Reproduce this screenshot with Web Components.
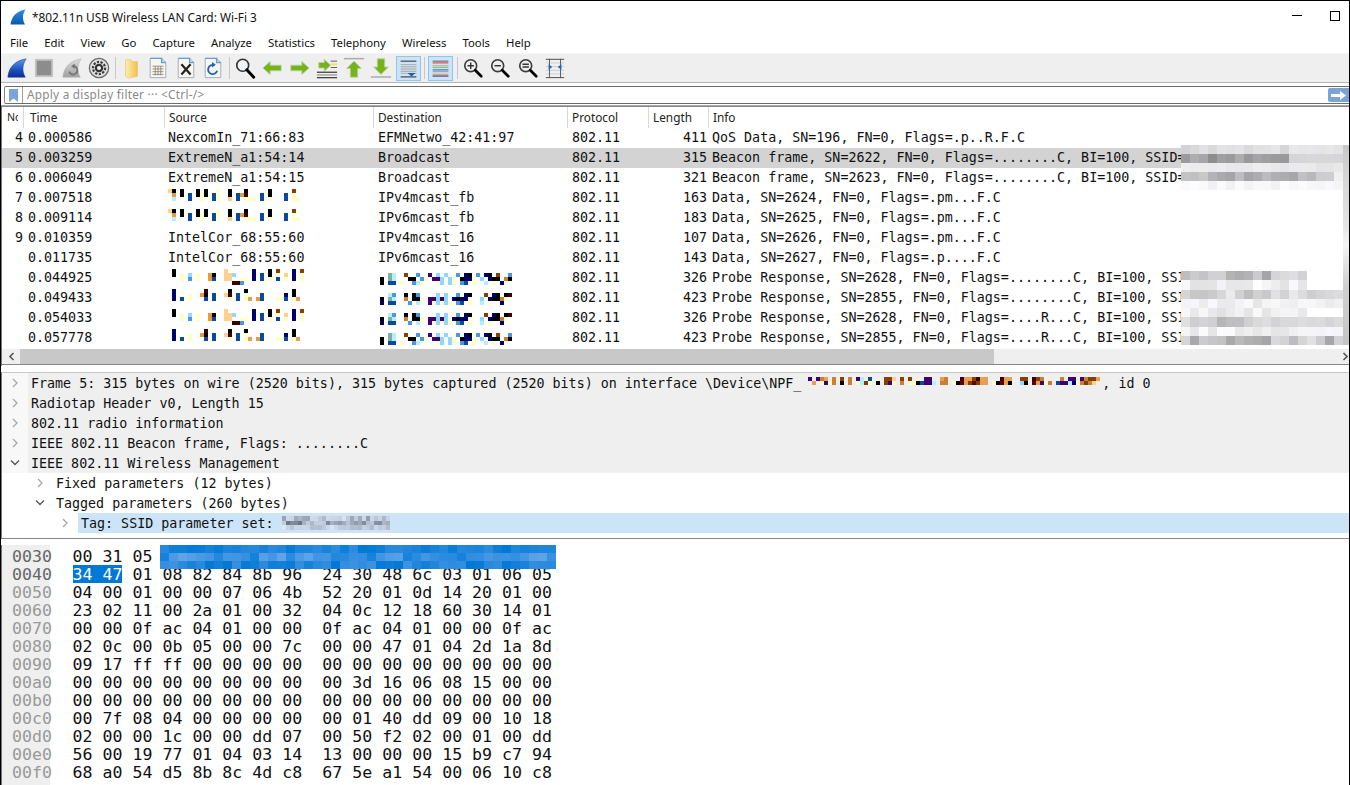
<!DOCTYPE html>
<html lang="en"><head><meta charset="utf-8"><title>Wireshark</title>
<style>html,body{margin:0;padding:0;background:#fff;overflow:hidden;width:1350px;height:785px}</style>
</head><body>
<wf-window>
  <wf-titlebar>*802.11n USB Wireless LAN Card: Wi-Fi 3</wf-titlebar>
  <wf-menubar items="File,Edit,View,Go,Capture,Analyze,Statistics,Telephony,Wireless,Tools,Help"></wf-menubar>
  <wf-toolbar></wf-toolbar>
  <wf-filter></wf-filter>
  <wf-packet-list></wf-packet-list>
  <wf-details></wf-details>
  <wf-hex></wf-hex>
</wf-window>
<script>
const MONO='"DejaVu Sans Mono","Liberation Mono",monospace';
const UI='"Noto Sans","Open Sans",sans-serif';
const PAL={k:'#000',b:'#0a4a9a',n:'#00006a',y:'#ffffcc',t:'#ffd090',o:'#e89a40',c:'#b0f0ff',l:'#4a98e0',m:'#400000',r:'#8a4000',p:'#400070',s:'#90d8ff',g:'#80b0a0',a:'#e8a050',e:'#c98030',d:'#600000',h:'#804000'};
function define(name,html,extra){
  customElements.define(name,class extends HTMLElement{
    connectedCallback(){ if(this.shadowRoot)return; const r=this.attachShadow({mode:'open'}); r.innerHTML=typeof html==='function'?html(this):html; if(extra)extra(this,r);}
  });
}
define('wf-mosaic',el=>{
  const rows=el.getAttribute('rows').split('|'),w=+(el.getAttribute('cw')||4),h=+(el.getAttribute('ch')||4);
  const cols=+(el.getAttribute('cols')||Math.max(...rows.map(r=>r.length)));
  let s='';
  rows.forEach((r,y)=>[...r].slice(0,cols).forEach((c,x)=>{if(PAL[c])s+=`<rect x="${x*w}" y="${y*h}" width="${w}" height="${h}" fill="${PAL[c]}"/>`;}));
  return `<style>:host{display:inline-block;line-height:0;vertical-align:top}svg{display:block}</style><svg width="${cols*w}" height="${rows.length*h}" shape-rendering="crispEdges">${s}</svg>`;
});
let seedState=7;
function rnd(){seedState=(seedState*16807)%2147483647;return seedState/2147483647;}
define('wf-blur',el=>{
  const w=+el.getAttribute('cw'),h=+el.getAttribute('ch'),bands=el.getAttribute('bands').split(';');
  const tint=el.getAttribute('tint');let s='',mx=0;
  bands.forEach((b,y)=>{const p=b.split(',');const c=+p[0],lo=+p[1],hi=+p[2],sw=+(p[3]||c),lo2=+(p[4]||lo),hi2=+(p[5]||hi);mx=Math.max(mx,c);
    for(let x=0;x<c;x++){const L=x<sw?lo:lo2,H=x<sw?hi:hi2;const v=Math.round(L+(H-L)*rnd());
      let col;
      if(tint==='blue'){const t=v/100;col=`rgb(${Math.round(0+180*t)},${Math.round(120+80*t)},${Math.round(215+30*t)})`;}
      else if(tint==='pale'){col=`rgb(${v-18},${v-6},${v+10>255?255:v+10})`;}
      else col=`rgb(${v},${v},${Math.min(255,v+Math.round(rnd()*4))})`;
      s+=`<rect x="${x*w}" y="${y*h}" width="${w}" height="${h}" fill="${col}"/>`;}
  });
  return `<style>:host{display:block;line-height:0}svg{display:block}</style><svg width="${mx*w}" height="${bands.length*h}" shape-rendering="crispEdges">${s}</svg>`;
});
define('wf-window',`<style>:host{display:flex;flex-direction:column;width:1350px;height:785px;box-sizing:border-box;border-top:1px solid #000;border-left:1px solid #000;border-right:1px solid #000;overflow:hidden;background:#fff;color:#000;font-family:${UI}}</style><slot></slot>`);
define('wf-titlebar',`<style>:host{display:flex;align-items:center;height:31px;flex:none;font-size:11.86px;color:#111}
svg.f{margin:0 6px 0 9px;flex:none}.t{flex:1}.b{width:46px;display:flex;justify-content:center;align-items:center;height:30px;flex:none}</style>
<svg class="f" width="16" height="16" viewBox="0 0 16 16"><defs><linearGradient id="g" x1="0" y1="0" x2="0" y2="1"><stop offset="0" stop-color="#2f8fe0"/><stop offset="1" stop-color="#0a58b0"/></linearGradient></defs><path d="M0.5 15.5C1.5 8 6 2 15.5 0.5C12.5 5 12 10 15 15.5Z" fill="url(#g)"/></svg>
<span class="t"><slot></slot></span>
<span class="b"><svg width="10" height="2" style="margin-top:-2px"><rect width="10" height="1" fill="#000"/></svg></span>
<span class="b" style="width:29px;margin-right:0"><svg width="10" height="10" style="margin-top:-2px"><rect x=".5" y=".5" width="9" height="9" fill="none" stroke="#000"/></svg></span>`);
define('wf-menubar',el=>{
  const it=el.getAttribute('items').split(',');
  return `<style>:host{display:flex;height:21px;flex:none;font-size:11.35px;padding-left:1px;align-items:center;box-sizing:border-box;color:#111}
  span{padding:0 8px 1px}</style>`+it.map(t=>`<span>${t}</span>`).join('');
});
const fin=(c1,c2)=>`<path d="M2 22C3 12 9 4 22 2C18 8 17 15 21 22Z" fill="url(#${c1})" stroke="${c2}" stroke-width=".6"/>`;
const mag=(inner)=>`<circle cx="9.5" cy="9.5" r="6.5" fill="#eef0f2" stroke="#3c3c3c" stroke-width="1.8"/><path d="M14.5 14.5L21 21" stroke="#000" stroke-width="3" stroke-linecap="round"/>${inner}`;
const page=(inner)=>`<path d="M3.5 1.5H16L20.5 6V22.5H3.5Z" fill="#f8f6ee" stroke="#9aa8b8"/><path d="M3.5 1.5H16V6H20.5" fill="none" stroke="#5fa0d8" stroke-width="1.6"/>${inner}`;
const ICONS={
 fin:`<defs><linearGradient id="fg" x1="0" y1="0" x2="0" y2="1"><stop offset="0" stop-color="#5f9be8"/><stop offset=".55" stop-color="#1f55c8"/><stop offset="1" stop-color="#0c2a8c"/></linearGradient></defs>${fin('fg','#1a3a90')}`,
 stop:`<rect x="3" y="3" width="18" height="18" fill="#8c8c8c" stroke="#c6c6c6" stroke-width="2"/>`,
 re:`<defs><linearGradient id="rg" x1="0" y1="0" x2="0" y2="1"><stop offset="0" stop-color="#dcdcdc"/><stop offset="1" stop-color="#a0a0a0"/></linearGradient></defs>${fin('rg','#b0b0b0')}<path d="M9 16a4.5 4.5 0 1 0 4-6" fill="none" stroke="#777" stroke-width="2"/><path d="M15 7l-4 3 4 3z" fill="#777"/>`,
 gear:`<circle cx="12" cy="12" r="10.5" fill="#e0e0e0" stroke="#6a6a6a" stroke-width="1.4"/><circle cx="12" cy="12" r="6.6" fill="none" stroke="#3a3a3a" stroke-width="2.4" stroke-dasharray="2.4 1.6"/><circle cx="12" cy="12" r="4.6" fill="#333"/><circle cx="12" cy="12" r="2.2" fill="#f2f2f2"/>`,
 folder:`<defs><linearGradient id="fo" x1="0" y1="0" x2="1" y2="0"><stop offset="0" stop-color="#ffeeb0"/><stop offset="1" stop-color="#f2c050"/></linearGradient></defs><path d="M6 3H12L13 5H19V21L10 23L6 21Z" fill="url(#fo)" stroke="#e2bd68" stroke-width=".6"/>`,
 file:page(`<g stroke="#8f8a78" stroke-width="1"><path d="M6 10H18M6 13H18M6 16H18M6 19H18M9 10V20M12 10V20M15 10V20" fill="none"/></g>`),
 close:page(`<path d="M7 8L17 19M17 8L7 19" stroke="#222" stroke-width="2.4"/>`),
 reload:page(`<path d="M16.5 15a5 5 0 1 1-3-6" fill="none" stroke="#1f63b8" stroke-width="2"/><path d="M11 5.5l4 3-4 3z" fill="#1f63b8"/>`),
 find:`<circle cx="9.5" cy="9" r="6.5" fill="#f1f4f6" stroke="#333" stroke-width="1.8"/><path d="M14 14L21.5 22" stroke="#000" stroke-width="3.2" stroke-linecap="round"/>`,
 left:`<path d="M2 12L10 5V9H22V15H10V19Z" fill="#74b418" stroke="#b8cfa0"/>`,
 right:`<path d="M22 12L14 5V9H2V15H14V19Z" fill="#74b418" stroke="#b8cfa0"/>`,
 go:`<path d="M14 9L7 2.5V6H1V12H7V15.5Z" fill="#74b418" stroke="#b8cfa0" transform="translate(2 0)"/><rect x="1" y="16" width="22" height="1.2" fill="#222"/><rect x="1" y="19" width="22" height="1.2" fill="#888"/><rect x="1" y="22" width="22" height="1.2" fill="#222"/><rect x="16" y="7" width="7" height="2" fill="#f2e060"/><rect x="16" y="4" width="7" height="1" fill="#555"/><rect x="16" y="11" width="7" height="1" fill="#555"/>`,
 top:`<rect x="1" y="1" width="22" height="1.6" fill="#aaa"/><path d="M12 4.5L20 12.5H16V22H8V12.5H4Z" fill="#74b418" stroke="#b8cfa0"/>`,
 bottom:`<rect x="1" y="21" width="22" height="1.6" fill="#aaa"/><path d="M12 19L20 11H16V2H8V11H4Z" fill="#74b418" stroke="#b8cfa0"/>`,
 auto:`<rect x="3" y="3" width="18" height="1.2" fill="#333"/>`+[7,9,11,13,15,17].map(y=>`<rect x="3" y="${y}" width="18" height="1" fill="#aaa"/>`).join('')+`<path d="M11 17H20L15.5 21Z" fill="#1f60b0"/><rect x="3" y="21" width="18" height="1.2" fill="#333"/>`,
 color:[[3,'#666'],[5,'#e04040'],[8,'#bbb'],[10,'#80c040'],[13,'#4060c0'],[15,'#a0a0a0'],[18,'#e0a030'],[20,'#402080']].map(a=>`<rect x="3" y="${a[0]}" width="18" height="1.2" fill="${a[1]}"/>`).join(''),
 zin:mag(`<path d="M6 9.5H13M9.5 6V13" stroke="#333" stroke-width="1.6"/>`),
 zout:mag(`<path d="M6 9.5H13" stroke="#333" stroke-width="1.6"/>`),
 zreset:mag(`<path d="M6 8H13M6 11H13" stroke="#333" stroke-width="1.6"/>`),
 resize:`<rect x="2" y="2" width="20" height="1" fill="#444"/><rect x="2" y="22" width="20" height="1" fill="#444"/>`+[6,10,14,18].map(y=>`<rect x="2" y="${y}" width="20" height="1" fill="#ccc"/>`).join('')+`<path d="M6 2V23M18 2V23" stroke="#555"/><path d="M5 8V14L9 11ZM19 8V14L15 11Z" fill="#1f63b8"/>`
};
define('wf-tool',el=>{
  const on=el.hasAttribute('on');
  return `<style>:host{display:flex;width:27.25px;height:28px;align-items:center;justify-content:center;flex:none}
  .b{width:25px;height:25px;display:flex;align-items:center;justify-content:center;box-sizing:border-box;${on?'background:#cce4f7;border:1px solid #90c4f0;':''}}</style>
  <div class="b"><svg width="${on?21:22}" height="${on?21:22}" viewBox="0 0 24 24">${ICONS[el.getAttribute('icon')]}</svg></div>`;
});
define('wf-sep',`<style>:host{display:flex;width:5px;justify-content:center;flex:none}i{display:block;width:1px;height:22px;margin-top:3px;background:#c8c8c8}</style><i></i>`);
define('wf-toolbar',()=>{
  const g=[['fin','stop','re','gear'],['folder','file','close','reload'],['find','left','right','go','top','bottom','auto*'],['color*'],['zin','zout','zreset','resize']];
  return `<style>:host{display:flex;height:30px;flex:none;box-sizing:border-box;background:#efefef;border-top:1px solid #f6f6f6;border-bottom:1px solid #b4b4b4;padding-left:2.5px}</style>`+
  g.map(x=>x.map(i=>`<wf-tool icon="${i.replace('*','')}"${i.endsWith('*')?' on':''}></wf-tool>`).join('')).join('<wf-sep></wf-sep>');
});
define('wf-filter',`<style>:host{display:block;height:22px;flex:none;box-sizing:border-box;padding-top:3px;background:#fff}
.f{display:flex;align-items:center;height:18px;box-sizing:border-box;border-top:1px solid #6c6c6c;border-bottom:1px solid #6c6c6c;border-left:1px solid #8a8a8a;margin-left:3px;border-radius:2px 0 0 2px}
.m{width:17px;height:16px;display:flex;justify-content:center;align-items:center;border-right:1px solid #a0a0a0;flex:none}
.p{flex:1;padding-left:4px;font:11.8px/13px ${UI};color:#8a8a8a;letter-spacing:.25px;margin-top:-2px}
.g{width:21px;height:14px;background:#7ba4d6;border-radius:2px 0 0 2px;display:flex;justify-content:center;align-items:center;flex:none}</style>
<div class="f"><span class="m"><svg width="9" height="13" viewBox="0 0 9 13"><path d="M0 0H9V13L4.5 9.5L0 13Z" fill="#7aa5d8"/></svg></span>
<span class="p">Apply a display filter ··· &lt;Ctrl-/&gt;</span>
<span class="g"><svg width="15" height="9" viewBox="0 0 15 9"><path d="M0 3H9V0L15 4.5L9 9V6H0Z" fill="#fff"/></svg></span></div>`);
const COLS='22px 141px 209px 194px 81px 60px 1fr';
const SRC=`<wf-mosaic style="margin:1px 0 0 0" rows="tk.k...k.k..y..k...k.....k.....r..|.o.k.b.kyk.by..k.bom...b.k...b.y..|.c...b..y..by..t.b.yyy.b.y...b.yy."></wf-mosaic>`;
const A=`<wf-mosaic style="margin:1px 0 0 0" rows=".k............t......n...k.r...n.r|.k.y.s.y..ok..tts....n.b.k.y.t.n.y|...y.l.y..ob..tt..yy.n.b.y.b.y.n.y|................mml"></wf-mosaic>`;
const B=`<wf-mosaic style="margin:1px 0 0 0" rows=".n.......m.....k...k...........k..|.n...y..ok.b..tm.b.y...b.....n.k..|.n.b.y...b.b...y.b.ya.ob...yyb.ya."></wf-mosaic>`;
const D1=`<wf-mosaic cols="34" style="margin:5px 0 0 2px" rows="..gc..r..l..p.s.s..l.nk.l.nk.r..l.|k.gc...kk.ly.pps.sy.knny.s.nkk.ek.|k.bb.y..lcy...ys.sy.lb.y..c.y.n.."></wf-mosaic>`;
const D2=`<wf-mosaic cols="34" style="margin:5px 0 0 2px" rows="..cl..k.kl....s.s..l.nk...h.nk.km.|k.gc..e.kky.ppsps.nknny..s.nkkey.|n.bb...l.c..pysysy.lb.y..c.y..n."></wf-mosaic>`;
const ROWS=[
['4','0.000586','NexcomIn_71:66:83','EFMNetwo_42:41:97','802.11','411','QoS Data, SN=196, FN=0, Flags=.p..R.F.C'],
['5','0.003259','ExtremeN_a1:54:14','Broadcast','802.11','315','Beacon frame, SN=2622, FN=0, Flags=........C, BI=100, SSID='],
['6','0.006049','ExtremeN_a1:54:15','Broadcast','802.11','321','Beacon frame, SN=2623, FN=0, Flags=........C, BI=100, SSID='],
['7','0.007518',SRC,'IPv4mcast_fb','802.11','163','Data, SN=2624, FN=0, Flags=.pm...F.C'],
['8','0.009114',SRC,'IPv6mcast_fb','802.11','183','Data, SN=2625, FN=0, Flags=.pm...F.C'],
['9','0.010359','IntelCor_68:55:60','IPv4mcast_16','802.11','107','Data, SN=2626, FN=0, Flags=.pm...F.C'],
['','0.011735','IntelCor_68:55:60','IPv6mcast_16','802.11','143','Data, SN=2627, FN=0, Flags=.p....F.C'],
['','0.044925',A,D1,'802.11','326','Probe Response, SN=2628, FN=0, Flags=........C, BI=100, SSI'],
['','0.049433',B,D2,'802.11','423','Probe Response, SN=2855, FN=0, Flags=........C, BI=100, SSI'],
['','0.054033',A,D2,'802.11','326','Probe Response, SN=2628, FN=0, Flags=....R...C, BI=100, SSI'],
['','0.057778',B,D1,'802.11','423','Probe Response, SN=2855, FN=0, Flags=....R...C, BI=100, SSI']];
define('wf-packet-list',()=>`<style>
:host{display:block;position:relative;height:261px;flex:none;box-sizing:border-box;border-top:1px solid #a8a8a8;border-left:1px solid #777;background:#fff}
.topl{height:1px;background:#888}
.h,.r{display:grid;grid-template-columns:${COLS};height:20px;white-space:pre;overflow:hidden}
.h{height:21px;font:11.8px/20px ${UI};color:#222}
.h span{border-right:1px solid #d8d8d8;padding-left:4px;overflow:hidden}
.h span:first-child i{display:block;font-style:normal;font-size:10.6px;width:11px;overflow:hidden;margin-left:1px}
.h span:nth-child(2){padding-left:6px}.h span:last-child{border:0}
.r{font:13.33px/19px ${MONO};color:#111}
.r span{overflow:hidden;padding-left:4px}
.r span:first-child{text-align:right;padding:0 1px 0 0}
.r span:nth-child(2){padding-left:4px}
.r span:nth-child(3){padding-left:3px}
.r span:nth-child(6){text-align:right;padding:0 2px 0 0}
.r span:nth-child(7){padding-left:3px}
.sel{background:#d3d3d3}
.body{position:relative;height:220px}
wf-blur{position:absolute}
.strip{position:absolute;left:1341px;top:17px;width:6px;height:200px;background:linear-gradient(#c8c8c8,#d8d8d8 20%,#e4e4e4 40%,#f4f4f4 50%,#d0d0d0 70%,#c4c4c4 100%)}
.sb{position:absolute;left:0;right:0;top:243px;background:#efefef;border-bottom:1px solid #888;height:15px}
.th{position:absolute;left:18px;width:974px;top:0;height:15px;background:#c8c8c8}
svg.a{position:absolute;top:3px}
</style>
<div class="topl"></div>
<div class="h"><span><i>No.</i></span><span>Time</span><span>Source</span><span>Destination</span><span>Protocol</span><span>Length</span><span>Info</span></div>
<div class="body">${ROWS.map((r,i)=>`<div class="r${i===1?' sel':''}">${r.map(c=>`<span>${c}</span>`).join('')}</div>`).join('')}
<wf-blur cw="9" ch="9" style="left:1179px;top:17px" bands="18,210,232,12,226,232;18,140,176,12,212,216;18,232,238,10,228,236;18,165,205,15,200,245;18,238,252"></wf-blur>
<wf-blur cw="9" ch="9.25" style="left:1179px;top:143px" bands="14,160,225;14,225,255;18,190,235;18,225,250;14,225,250;18,180,225;18,228,252;18,165,225"></wf-blur>
<div class="strip"></div></div>
<div class="sb"><div class="th"></div>
<svg class="a" style="left:6px" width="7" height="9" viewBox="0 0 7 9"><path d="M5.5 1L2 4.5L5.5 8" fill="none" stroke="#555" stroke-width="1.6"/></svg>
<svg class="a" style="left:1340px" width="7" height="9" viewBox="0 0 7 9"><path d="M1.5 1L5 4.5L1.5 8" fill="none" stroke="#555" stroke-width="1.6"/></svg></div>`);
define('wf-tree-row',el=>{
  const lv=+(el.getAttribute('level')||0),open=el.hasAttribute('open'),sel=el.hasAttribute('sel'),sh=el.hasAttribute('shade');
  const ch=open?`<svg width="10" height="8" viewBox="0 0 10 8"><path d="M1 1.5L5 5.5L9 1.5" fill="none" stroke="#555" stroke-width="1.3"/></svg>`:`<svg width="8" height="10" viewBox="0 0 8 10"><path d="M2 1L6 5L2 9" fill="none" stroke="#a8a8a8" stroke-width="1.3"/></svg>`;
  return `<style>:host{display:flex;height:20px;overflow:hidden;font:13.33px/21px ${MONO};color:#111;white-space:pre;${sh?'background:#efefef;':''}}
  .c{width:26px;flex:none;margin-left:${lv*25}px;display:flex;align-items:center;justify-content:center;${sh?'background:#f8f8f8;':''}}
  .t{flex:1;padding-left:3px;${sel?'background:#cce4f7;':''}}</style><span class="c">${ch}</span><span class="t"><slot></slot></span>`;
});
const FM1='p.pea.e.r.e.pc.b...rrt.r.r...pp..ae...maarmaa...maa..rr.mre....e.pp.pehha';
const FM2='.a.ypye.k.e.ychy.k.hpy.e.yykbppc.ee.ykdahdhaa.ykdak..sk.dapye.bppcnyehet.';
define('wf-details',`<style>:host{display:block;height:167px;flex:none;box-sizing:border-box;border-top:1px solid #c8c8c8;margin-top:6px;border-left:1px solid #777;border-bottom:1px solid #888}
wf-mosaic{margin:4px 0 0 7px}</style><wf-tree-row shade>Frame 5: 315 bytes on wire (2520 bits), 315 bytes captured (2520 bits) on interface \\Device\\NPF_<wf-mosaic cols="73" rows="${FM1}|${FM2}"></wf-mosaic><span style="margin-left:2px">, id 0</span></wf-tree-row>
<wf-tree-row shade>Radiotap Header v0, Length 15</wf-tree-row>
<wf-tree-row shade>802.11 radio information</wf-tree-row>
<wf-tree-row shade>IEEE 802.11 Beacon frame, Flags: ........C</wf-tree-row>
<wf-tree-row shade open>IEEE 802.11 Wireless Management</wf-tree-row>
<wf-tree-row level="1">Fixed parameters (12 bytes)</wf-tree-row>
<wf-tree-row level="1" open>Tagged parameters (260 bytes)</wf-tree-row>
<wf-tree-row level="2" sel>Tag: SSID parameter set: <wf-blur tint="pale" cw="4" ch="4.5" style="display:inline-block;vertical-align:top;margin-top:3px" bands="27,150,235;27,120,230;27,190,240"></wf-blur></wf-tree-row>`);
const HEX=[['0030','00 31 05'],['0040','<b>34 47</b> 01 08 82 84 8b 96  24 30 48 6c 03 01 06 05'],['0050','04 00 01 00 00 07 06 4b  52 20 01 0d 14 20 01 00'],['0060','23 02 11 00 2a 01 00 32  04 0c 12 18 60 30 14 01'],['0070','00 00 0f ac 04 01 00 00  0f ac 04 01 00 00 0f ac'],['0080','02 0c 00 0b 05 00 00 7c  00 00 47 01 04 2d 1a 8d'],['0090','09 17 ff ff 00 00 00 00  00 00 00 00 00 00 00 00'],['00a0','00 00 00 00 00 00 00 00  00 3d 16 06 08 15 00 00'],['00b0','00 00 00 00 00 00 00 00  00 00 00 00 00 00 00 00'],['00c0','00 7f 08 04 00 00 00 00  00 01 40 dd 09 00 10 18'],['00d0','02 00 00 1c 00 00 dd 07  00 50 f2 02 00 01 00 dd'],['00e0','56 00 19 77 01 04 03 14  13 00 00 00 15 b9 c7 94'],['00f0','68 a0 54 d5 8b 8c 4d c8  67 5e a1 54 00 06 10 c8']];
define('wf-hex',`<style>:host{display:block;flex:1;position:relative;margin-top:6px;border-left:1px solid #777;overflow:hidden;
background:linear-gradient(90deg,#efefef 48px,#fff 48px);padding-top:3px;font:16.6px/18px ${MONO};color:#111;white-space:pre}
.l{display:flex;height:18px}.o{width:70.5px;padding-left:10px;box-sizing:border-box;color:#999;flex:none}.o.d{color:#666}
b{font-weight:normal;background:#0078d7;color:#fff;display:inline-block;height:18px;margin-top:-1px;line-height:20px}
wf-blur{position:absolute;left:158px;top:0}</style>${HEX.map((h,i)=>`<div class="l"><span class="o${i<2?' d':''}">${h[0]}</span><span>${h[1]}</span></div>`).join('')}<wf-blur tint="blue" cw="9" ch="8" bands="44,0,25;44,10,55;44,0,35"></wf-blur>`);
</script>
</body></html>
